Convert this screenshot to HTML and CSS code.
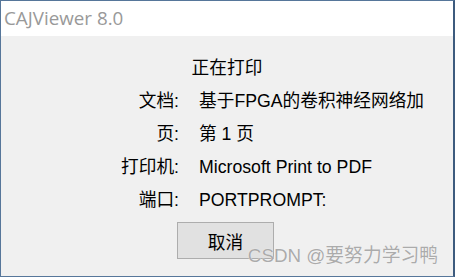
FILE: index.html
```html
<!DOCTYPE html>
<html lang="zh-CN">
    <head>
        <meta charset="utf-8">
        <title>CAJViewer 8.0</title>
        <link rel="stylesheet" href="styles.css">
    </head>
    <body>
        <div class="window">
            <header class="titlebar">CAJViewer 8.0</header>
            <main class="content">
                <p class="status">正在打印</p>
                <dl class="info">
                    <dt>文档:</dt>
                    <dd>基于FPGA的卷积神经网络加</dd>
                    <dt>页:</dt>
                    <dd>第 1 页</dd>
                    <dt>打印机:</dt>
                    <dd>Microsoft Print to PDF</dd>
                    <dt>端口:</dt>
                    <dd>PORTPROMPT:</dd>
                </dl>
                <div class="actions">
                    <button class="btn" type="button">取消</button>
                </div>
            </main>
            <div class="watermark">CSDN @要努力学习鸭</div>
        </div>
    </body>
</html>
```

FILE: styles.css
```css
html, body, div, p, dl, dt, dd, header, main {
    margin: 0;
    padding: 0;
}
body {
    width: 455px;
    height: 277px;
    overflow: hidden;
    font-family: "Liberation Sans", "Noto Sans CJK SC", sans-serif;
    font-size: 17.7px;
    color: #000;
}
.window {
    position: relative;
    box-sizing: border-box;
    width: 100%;
    height: 100%;
    display: flex;
    flex-direction: column;
    background: #f0f0f0;
    border: 1px solid #56769a;
    border-right-width: 2px;
    border-right-color: #3d5b7e;
}
.titlebar {
    height: 35px;
    line-height: 34px;
    padding-left: 3px;
    background: #fff;
    color: #999;
    font-family: "Open Sans", sans-serif;
    font-size: 18.8px;
}
.content {
    flex: 1;
    padding-top: 16px;
}
.status {
    text-align: center;
    line-height: 33px;
}
.info {
    display: grid;
    grid-template-columns: 178px 1fr;
    column-gap: 20px;
    line-height: 33px;
}
.info dt {
    text-align: right;
}
.actions {
    display: flex;
    justify-content: center;
    padding-right: 3px;
    margin-top: 5px;
}
.btn {
    width: 97px;
    height: 37px;
    background: #e1e1e1;
    border: 1px solid #adadad;
    font: inherit;
    color: #000;
    padding: 0;
}
.watermark {
    /* sits over the dialog, like the site stamp on the screenshot */
    position: absolute;
    right: 15px;
    bottom: 9px;
    font-size: 18.8px;
    color: #ababab;
    text-shadow: 0 0 1px #fff;
}
```
